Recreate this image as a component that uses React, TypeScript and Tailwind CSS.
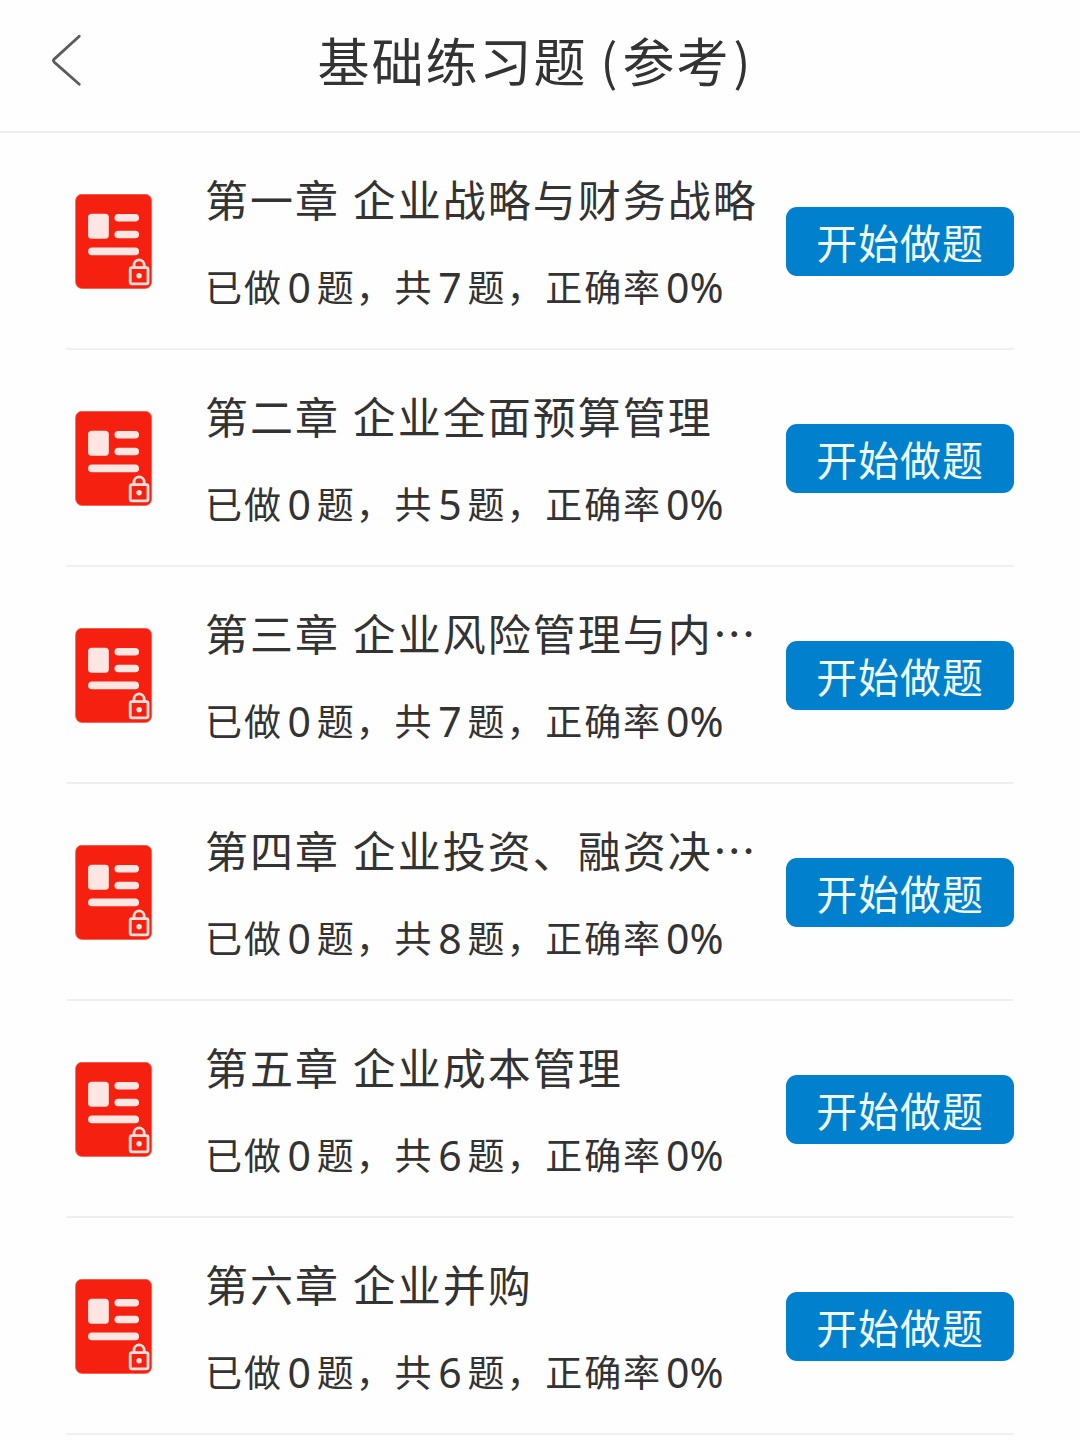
interface Chapter {
  id: number;
  title: string;
  done: number;
  total: number;
  rate: number;
}

const chapters: Chapter[] = [
  { id: 1, title: '第一章 企业战略与财务战略', done: 0, total: 7, rate: 0 },
  { id: 2, title: '第二章 企业全面预算管理', done: 0, total: 5, rate: 0 },
  { id: 3, title: '第三章 企业风险管理与内…', done: 0, total: 7, rate: 0 },
  { id: 4, title: '第四章 企业投资、融资决…', done: 0, total: 8, rate: 0 },
  { id: 5, title: '第五章 企业成本管理', done: 0, total: 6, rate: 0 },
  { id: 6, title: '第六章 企业并购', done: 0, total: 6, rate: 0 },
];

const BackIcon = () => (
  <svg className="h-[54px] w-[34px]" viewBox="0 0 34 54" fill="none">
    <path
      d="M30.3 2.3 5.2 25.1q-1.5 1.5 0 3L30.3 50.3"
      stroke="#5c5c5c"
      strokeWidth="2.8"
      strokeLinecap="round"
      strokeLinejoin="round"
    />
  </svg>
);

const LockedPaperIcon = () => (
  <svg className="h-[96px] w-[78px] shrink-0" viewBox="0 0 78 96" fill="none">
    <rect x="0.6" y="0.2" width="76" height="94.3" rx="6.5" fill="#f5200f" stroke="#f4604f" strokeWidth="0.8" />
    <g fill="#ffe6e3">
      <rect x="13.1" y="19.8" width="20.7" height="25" rx="3.5" />
      <rect x="39.5" y="20" width="24.5" height="7.6" rx="3.8" />
      <rect x="39.5" y="36.7" width="24.5" height="7.6" rx="3.8" />
      <rect x="13.1" y="53.6" width="50.9" height="7.6" rx="3.8" />
    </g>
    <g stroke="#ffe0dc" strokeWidth="2.8">
      <rect x="55.2" y="73.6" width="17.8" height="16.2" rx="1.6" />
      <path d="M59 73.4v-2.4a5.1 5.1 0 0 1 10.2 0v2.4" />
    </g>
    <circle cx="64.1" cy="81.8" r="2.7" fill="#ffe6e3" />
  </svg>
);

const Digit = ({ value }: { value: number }) => (
  <span className="inline-block w-[34px] translate-y-px pr-px text-center font-['Noto_Sans'] text-[41px] leading-none tracking-normal">
    {value}
  </span>
);

const ChapterRow = ({ chapter }: { chapter: Chapter }) => (
  <li className="flex h-[217px] items-center border-b-2 border-[#f0f0f0] pt-[2px] pl-[9px]">
    <LockedPaperIcon />
    <div className="ml-[52px] w-[581px] pb-[2px] whitespace-nowrap">
      <h2 className="text-[43px] leading-[60px] tracking-[2px] [word-spacing:1px]">{chapter.title}</h2>
      <p className="mt-[30px] flex h-[56px] items-baseline text-[37px] leading-[56px] tracking-[1.9px]">
        <span>已做</span>
        <Digit value={chapter.done} />
        <span>题，共</span>
        <Digit value={chapter.total} />
        <span>题，正确率</span>
        <span className="ml-[4px] translate-y-px font-['Noto_Sans'] text-[41px] leading-none tracking-normal">
          {chapter.rate}%
        </span>
      </p>
    </div>
    <button className="h-[69px] w-[228px] shrink-0 rounded-[11px] bg-[#0080cd] text-[41px] leading-none tracking-[0.9px] text-[#f2fcff]">
      开始做题
    </button>
  </li>
);

export default function App() {
  return (
    <div className="h-[1440px] w-[1080px] overflow-hidden bg-[#fefefe] font-['Noto_Sans_CJK_SC',sans-serif] text-[#333333]">
      <header className="grid h-[133px] grid-cols-[200px_1fr_200px] items-center border-b-2 border-[#eeeeee] pb-[10px]">
        <button className="pl-[49px]" aria-label="返回">
          <BackIcon />
        </button>
        <h1 className="pr-[10px] pb-[2px] text-center text-[52px] leading-none tracking-[2px]">
          基础练习题
          <span className="mr-[3px] ml-[13px] inline-block -translate-y-px text-[50px]">(</span>
          参考
          <span className="ml-[3px] inline-block -translate-y-px text-[50px]">)</span>
        </h1>
      </header>
      <ul className="mx-[66px]">
        {chapters.map((chapter) => (
          <ChapterRow key={chapter.id} chapter={chapter} />
        ))}
      </ul>
    </div>
  );
}
